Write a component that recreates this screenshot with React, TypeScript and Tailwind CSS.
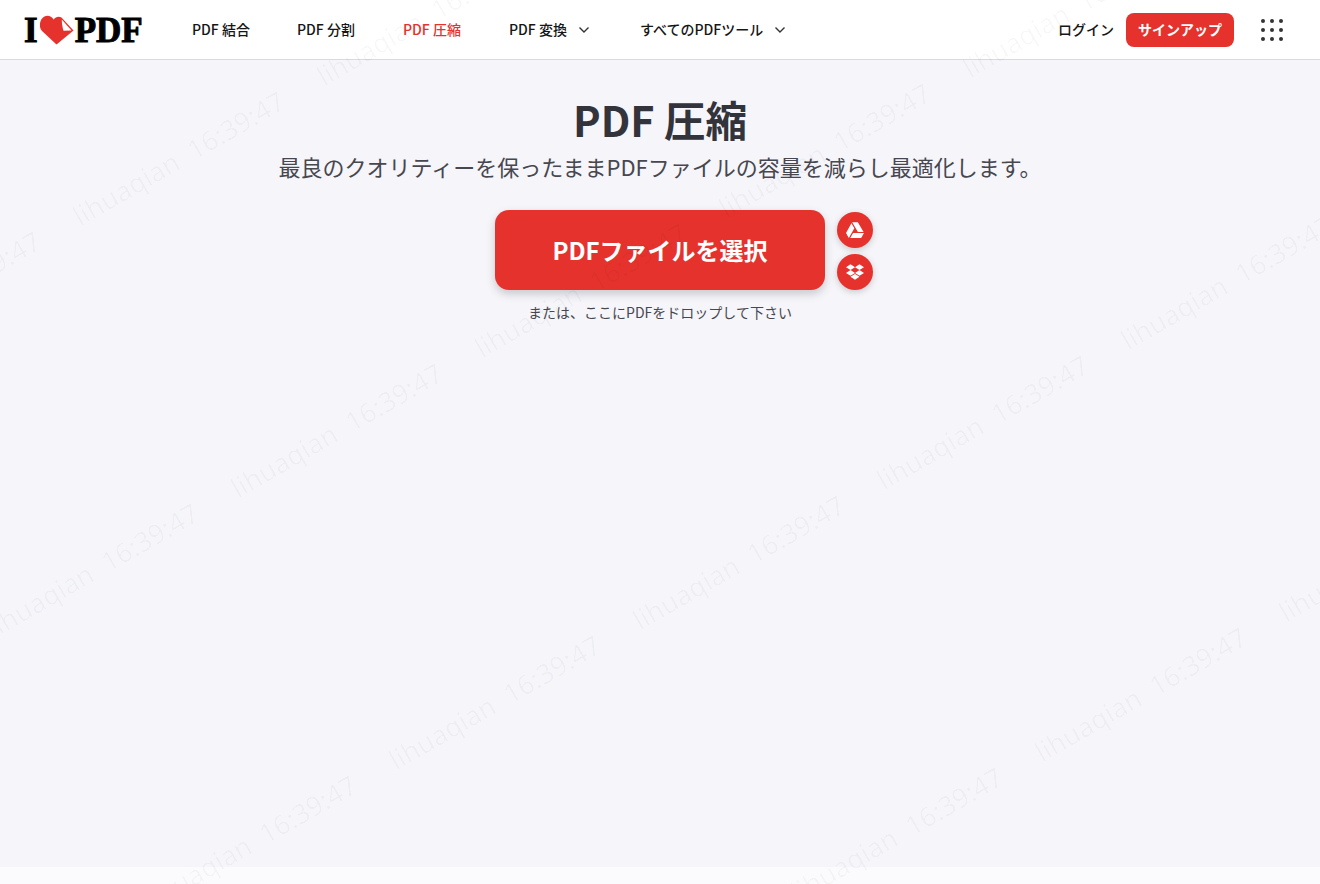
import { FaDropbox, FaGoogleDrive } from "react-icons/fa";

const marks: { x: number; y: number }[] = [];
for (let i = -4; i <= 6; i++) {
  for (let j = -4; j <= 6; j++) {
    const x = 68 + 158 * i + 402 * j;
    const y = 228 + 272 * i + 132 * j;
    if (x > -260 && x < 1340 && y > -20 && y < 1060) marks.push({ x, y });
  }
}

function Chevron() {
  return (
    <svg width="12" height="8" viewBox="0 0 12 8" fill="none" stroke="#333" strokeWidth="1.4" className="ml-[11px]">
      <path d="M1.5 1.5 6 6l4.500-4.500" />
    </svg>
  );
}

function Heart() {
  return (
    <svg width="34" height="30" viewBox="0 0 34 30" className="mx-[2px] shrink-0">
      <path d="M16.500 29.500 2 16C-1.500 12-.5 4.500 4 1.800 7.500-.2 11.500 1 13.500 4.500 15.500 2 18.500.8 21.500 2.500L33.500 15.500Z" fill="#e5322d" />
      <path d="M21.800 4.500 31.500 15.500 23.500 15.800C22.300 12 21.800 8 21.800 4.500Z" fill="#fff" />
    </svg>
  );
}

function Logo() {
  return (
    <div className="flex items-center h-[59px] ml-[24px] w-[120px] shrink-0">
      <span className="font-['Liberation_Serif',serif] font-bold text-[35px] leading-none text-black [-webkit-text-stroke:1px_#000] mt-[1px]">I</span>
      <Heart />
      <span className="font-['Liberation_Serif',serif] font-bold text-[35px] leading-none text-black [-webkit-text-stroke:1px_#000] mt-[1px] -ml-[1px]">PDF</span>
    </div>
  );
}

export default function App() {
  return (
    <div className="relative h-[884px] overflow-hidden flex flex-col bg-[#f5f5fa] font-['Noto_Sans_CJK_JP','Noto_Sans',sans-serif]">
      <header className="h-[60px] shrink-0 bg-white border-b border-[#d9d9de] flex items-center">
        <Logo />
        <nav className="flex items-center ml-[48px] text-[14px] font-medium text-[#161616]">
          <a className="w-[105px]">PDF 結合</a>
          <a className="w-[106px]">PDF 分割</a>
          <a className="w-[106px] text-[#e5322d]">PDF 圧縮</a>
          <a className="w-[131px] flex items-center">PDF 変換<Chevron /></a>
          <a className="flex items-center">すべてのPDFツール<Chevron /></a>
        </nav>
        <div className="ml-auto flex items-center">
          <a className="text-[14px] font-medium text-[#161616]">ログイン</a>
          <a className="ml-[12px] w-[108px] h-[34px] rounded-[8px] bg-[#e5322d] text-white text-[14px] font-bold flex items-center justify-center">サインアップ</a>
          <div className="ml-[27px] mr-[37px] grid grid-cols-3 gap-[5px]">
            {Array.from({ length: 9 }).map((_, i) => (
              <span key={i} className="w-[4px] h-[4px] rounded-full bg-[#333]" />
            ))}
          </div>
        </div>
      </header>

      <main className="flex-1 flex flex-col items-center">
        <h1 className="mt-[30px] text-[41.5px] leading-[58px] font-semibold text-[#33333b]">PDF 圧縮</h1>
        <p className="mt-[3px] text-[22px] leading-[30px] text-[#47474f]">最良のクオリティーを保ったままPDFファイルの容量を減らし最適化します。</p>
        <div className="mt-[29px] flex items-start ml-[48px]">
          <button className="w-[330px] h-[80px] rounded-[14px] bg-[#e5322d] text-white text-[24px] font-semibold shadow-[0_4px_8px_rgba(72,72,72,0.25)]">
            PDFファイルを選択
          </button>
          <div className="ml-[12px] mt-[2px] flex flex-col gap-[6px]">
            <span className="w-[36px] h-[36px] rounded-full bg-[#e5322d] text-white flex items-center justify-center shadow-[0_2px_6px_rgba(72,72,72,0.25)]">
              <FaGoogleDrive size={18} />
            </span>
            <span className="w-[36px] h-[36px] rounded-full bg-[#e5322d] text-white flex items-center justify-center shadow-[0_2px_6px_rgba(72,72,72,0.25)]">
              <FaDropbox size={18} />
            </span>
          </div>
        </div>
        <p className="mt-[12px] text-[14px] leading-[20px] text-[#47474f]">または、ここにPDFをドロップして下さい</p>
      </main>

      <footer className="h-[17px] shrink-0 bg-[#fbfbfd]" />

      <div className="absolute inset-0 pointer-events-none overflow-hidden">
        {marks.map((m) => (
          <span
            key={`${m.x}-${m.y}`}
            className="absolute whitespace-pre origin-top-left -rotate-[30deg] font-['Noto_Sans',sans-serif] text-[27px] leading-none text-[rgba(0,0,0,0.03)]"
            style={{ left: m.x, top: m.y - 22 }}
          >
            {"lihuaqian  16:39:47"}
          </span>
        ))}
      </div>
    </div>
  );
}
